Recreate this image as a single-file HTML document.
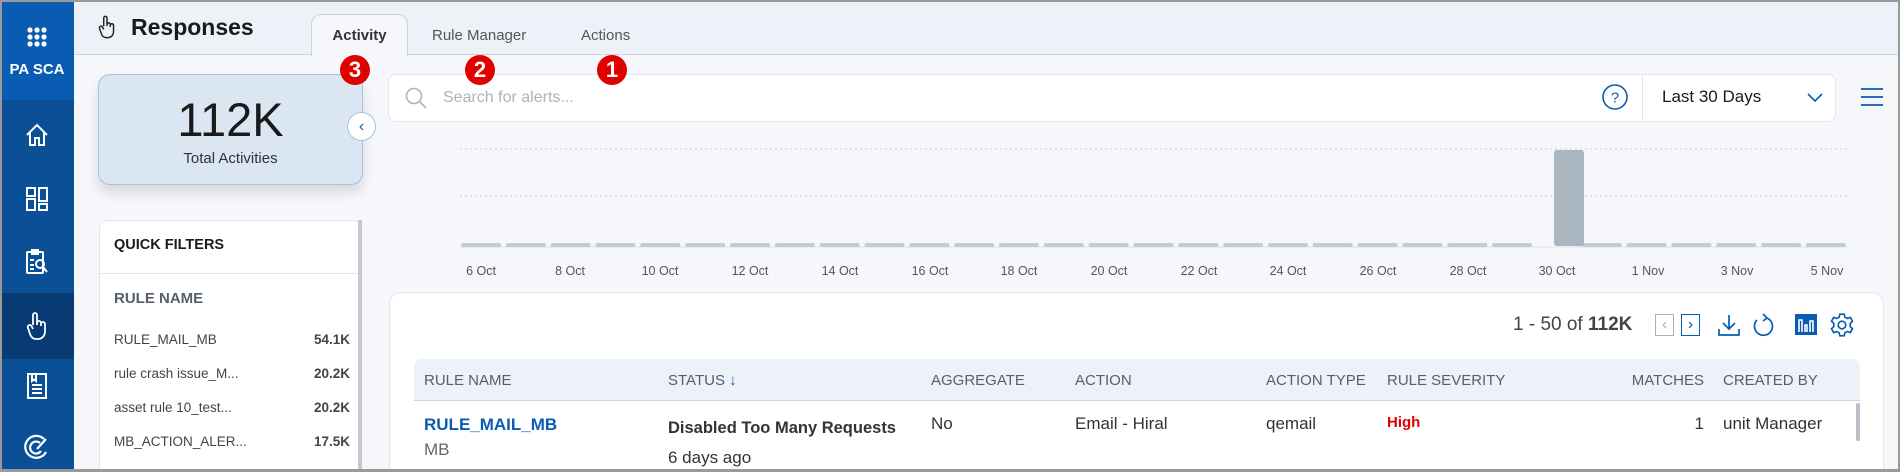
<!DOCTYPE html>
<html style="width:1900px;height:472px;overflow:hidden"><head><meta charset="utf-8"><style>
*{box-sizing:border-box;margin:0;padding:0}
body{width:1900px;height:472px;overflow:hidden;font-family:"Liberation Sans",sans-serif;background:#f5f7fa;position:relative;color:#222}
.a{position:absolute;white-space:nowrap}
.frame{position:absolute;left:0;top:0;width:1900px;height:472px;border:2px solid #9a9a9a;border-bottom-width:3px;pointer-events:none;z-index:50}
.side{left:0;top:0;width:74px;height:472px;background:#0b4f96}
.badge{width:30px;height:30px;border-radius:50%;background:#e00000;color:#fff;font-size:22px;font-weight:bold;text-align:center;line-height:30px;z-index:20}
.th{font-size:15px;color:#55606b;top:372px}
.qf{font-size:13.5px;color:#444;left:114px}
.qv{font-size:13.5px;color:#444;font-weight:bold;right:1550px}
.lbl{font-size:12.5px;color:#555;top:264px;transform:translateX(-50%)}
</style></head><body>
<div class="a side"></div>
<div class="a" style="left:0;top:0;width:74px;height:100px;background:#0a5cb3"></div>
<div class="a" style="left:0;top:293px;width:74px;height:66px;background:#083b73"></div>
<svg class="a" style="left:26px;top:26px" width="22" height="22" viewBox="0 0 22 22" fill="#fff"><circle cx="4" cy="4" r="2.6"/><circle cx="11" cy="4" r="2.6"/><circle cx="18" cy="4" r="2.6"/><circle cx="4" cy="11" r="2.6"/><circle cx="11" cy="11" r="2.6"/><circle cx="18" cy="11" r="2.6"/><circle cx="4" cy="18" r="2.6"/><circle cx="11" cy="18" r="2.6"/><circle cx="18" cy="18" r="2.6"/></svg>
<div class="a" style="left:0;width:74px;top:61px;text-align:center;color:#fff;font-weight:bold;font-size:15px">PA SCA</div>
<svg class="a" style="left:24px;top:122px" width="26" height="26" viewBox="0 0 26 26" fill="none" stroke="#fff" stroke-width="2"><path d="M3 13 L13 3 L23 13 M6 10 V23 H11 V16 H15 V23 H20 V10"/></svg>
<svg class="a" style="left:25px;top:186px" width="24" height="26" viewBox="0 0 24 26" fill="none" stroke="#fff" stroke-width="2"><rect x="2" y="2" width="8" height="8"/><rect x="2" y="13" width="8" height="11"/><rect x="14" y="2" width="8" height="13"/><rect x="14" y="18" width="8" height="6"/></svg>
<svg class="a" style="left:24px;top:248px" width="26" height="28" viewBox="0 0 26 28" fill="none" stroke="#fff" stroke-width="2"><rect x="3" y="4" width="16" height="21" rx="1"/><path d="M8 2 H14 V6 H8Z M6 12 H10 M6 17 H10 M6 21 H10"/><circle cx="16" cy="16" r="4"/><path d="M19 19 L23 24"/></svg>
<svg class="a" style="left:26px;top:311px" width="22" height="30" viewBox="0 0 22 30" fill="none" stroke="#fff" stroke-width="1.8"><path d="M7 14 V4 a2 2 0 0 1 4 0 V14 M11 12 a2 2 0 0 1 4 0 V15 M15 13 a2 2 0 0 1 4 0 V20 c0 5 -3 8 -7 8 H10 c-3 0 -5 -2 -6 -5 L2 17 a2 2 0 0 1 3.5 -2 L7 18"/></svg>
<svg class="a" style="left:26px;top:372px" width="22" height="28" viewBox="0 0 22 28" fill="none" stroke="#fff" stroke-width="2"><rect x="2" y="2" width="18" height="24"/><path d="M6 2 V9 L8 7.5 L10 9 V2 M6 13 H16 M6 17 H16 M6 21 H16"/></svg>
<svg class="a" style="left:24px;top:434px" width="26" height="28" viewBox="0 0 26 28" fill="none" stroke="#fff" stroke-width="2.2"><path d="M20 5 A11 11 0 1 0 22 18 M16 9 A6 6 0 1 0 17 17 M13 15 L22 5"/></svg>

<div class="a" style="left:74px;top:0;width:1826px;height:55px;background:#edf2f9;border-bottom:1px solid #c9d4e2"></div>
<svg class="a" style="left:98px;top:14px" width="18" height="26" viewBox="0 0 22 30" fill="none" stroke="#222" stroke-width="1.8"><path d="M7 14 V4 a2 2 0 0 1 4 0 V14 M11 12 a2 2 0 0 1 4 0 V15 M15 13 a2 2 0 0 1 4 0 V20 c0 5 -3 8 -7 8 H10 c-3 0 -5 -2 -6 -5 L2 17 a2 2 0 0 1 3.5 -2 L7 18"/></svg>
<div class="a" style="left:131px;top:14px;font-size:23px;font-weight:bold;color:#1a1a1a">Responses</div>
<div class="a" style="left:311px;top:14px;width:97px;height:42px;background:#f5f7fa;border:1px solid #c9d4e2;border-bottom:none;border-radius:10px 10px 0 0"></div>
<div class="a" style="left:311px;width:97px;top:27px;text-align:center;font-size:15px;font-weight:bold;color:#333">Activity</div>
<div class="a" style="left:432px;top:27px;font-size:15px;color:#555">Rule Manager</div>
<div class="a" style="left:581px;top:27px;font-size:15px;color:#555">Actions</div>
<div class="a badge" style="left:340px;top:55px">3</div>
<div class="a badge" style="left:465px;top:55px">2</div>
<div class="a badge" style="left:597px;top:55px">1</div>

<div class="a" style="left:98px;top:74px;width:265px;height:111px;background:#dbe6f3;border:1px solid #a9c2df;border-radius:12px;box-shadow:0 8px 12px rgba(0,0,0,.12)"></div>
<div class="a" style="left:98px;width:265px;top:92px;text-align:center;font-size:47px;color:#1a1a1a">112K</div>
<div class="a" style="left:98px;width:265px;top:150px;text-align:center;font-size:15px;color:#333">Total Activities</div>
<div class="a" style="left:347px;top:112px;width:29px;height:29px;border-radius:50%;background:#fff;border:1px solid #a9c2df;color:#0a5cb3;text-align:center;line-height:27px;font-size:16px">&#8249;</div>

<div class="a" style="left:99px;top:220px;width:262px;height:252px;background:#fff;border:1px solid #e1e6ec;border-bottom:none;border-radius:8px 8px 0 0"></div>
<div class="a" style="left:358px;top:220px;width:4px;height:252px;background:#c4c9cf"></div>
<div class="a" style="left:114px;top:237px;font-size:14.5px;font-weight:bold;color:#1a1a1a">QUICK FILTERS</div>
<div class="a" style="left:99px;top:273px;width:259px;height:1px;background:#e1e6ec"></div>
<div class="a" style="left:114px;top:290px;font-size:15px;font-weight:bold;color:#55606b">RULE NAME</div>
<div class="a qf" style="top:332px">RULE_MAIL_MB</div><div class="a qv" style="top:332px">54.1K</div>
<div class="a qf" style="top:366px">rule crash issue_M...</div><div class="a qv" style="top:366px">20.2K</div>
<div class="a qf" style="top:400px">asset rule 10_test...</div><div class="a qv" style="top:400px">20.2K</div>
<div class="a qf" style="top:434px">MB_ACTION_ALER...</div><div class="a qv" style="top:434px">17.5K</div>

<div class="a" style="left:388px;top:74px;width:1448px;height:48px;background:#fff;border:1px solid #e1e6ec;border-radius:8px"></div>
<svg class="a" style="left:404px;top:86px" width="24" height="24" viewBox="0 0 24 24" fill="none" stroke="#aab3bd" stroke-width="1.6"><circle cx="10" cy="10" r="7.5"/><path d="M15.5 15.5 L22 22"/></svg>
<div class="a" style="left:443px;top:89px;font-size:16px;color:#aab3bd">Search for alerts...</div>
<svg class="a" style="left:1601px;top:83px" width="28" height="28" viewBox="0 0 28 28" fill="none" stroke="#0a5cb3" stroke-width="1.6"><circle cx="14" cy="14" r="12"/><text x="14" y="19.5" text-anchor="middle" font-size="15" fill="#0a5cb3" stroke="none" font-family="Liberation Sans">?</text></svg>
<div class="a" style="left:1642px;top:75px;width:1px;height:46px;background:#e1e6ec"></div>
<div class="a" style="left:1662px;top:87px;font-size:17px;color:#1a1a1a">Last 30 Days</div>
<svg class="a" style="left:1806px;top:92px" width="18" height="12" viewBox="0 0 18 12" fill="none" stroke="#0a5cb3" stroke-width="1.6"><path d="M2 2 L9 9 L16 2"/></svg>
<svg class="a" style="left:1860px;top:87px" width="24" height="20" viewBox="0 0 24 20" fill="none" stroke="#0a5cb3" stroke-width="1.8"><path d="M1 2 H23 M1 10 H23 M1 18 H23"/></svg>

<svg class="a" style="left:0;top:0" width="1900" height="260">
<path d="M460 149 H1848 M460 196 H1848" stroke="#c9ced4" stroke-width="1" stroke-dasharray="2 3"/>
<path d="M460 247 H1848" stroke="#dde1e5"/>
<g fill="#c3ccd4" id="bars"></g>
<rect x="1554" y="150" width="30" height="96" rx="3" fill="#a9b6bf"/>
</svg>
<script>
var g=document.getElementById('bars'),s='';for(var i=0;i<31;i++){if(i==24)continue;var c=481+44.83*i;s+='<rect x="'+(c-20)+'" y="243" width="40" height="4" rx="2"/>';}g.innerHTML=s;
</script>
<div class="a lbl" style="left:481px">6 Oct</div><div class="a lbl" style="left:570px">8 Oct</div><div class="a lbl" style="left:660px">10 Oct</div><div class="a lbl" style="left:750px">12 Oct</div><div class="a lbl" style="left:840px">14 Oct</div><div class="a lbl" style="left:930px">16 Oct</div><div class="a lbl" style="left:1019px">18 Oct</div><div class="a lbl" style="left:1109px">20 Oct</div><div class="a lbl" style="left:1199px">22 Oct</div><div class="a lbl" style="left:1288px">24 Oct</div><div class="a lbl" style="left:1378px">26 Oct</div><div class="a lbl" style="left:1468px">28 Oct</div><div class="a lbl" style="left:1557px">30 Oct</div><div class="a lbl" style="left:1648px">1 Nov</div><div class="a lbl" style="left:1737px">3 Nov</div><div class="a lbl" style="left:1827px">5 Nov</div>

<div class="a" style="left:389px;top:292px;width:1495px;height:180px;background:#fff;border:1px solid #e1e6ec;border-bottom:none;border-radius:12px 12px 0 0"></div>
<div class="a" style="left:1513px;top:314px;font-size:19px;color:#444">1 - 50 of <b>112K</b></div>
<div class="a" style="left:1655px;top:314px;width:19px;height:22px;border:1px solid #aab3bd;color:#aab3bd;font-size:16px;text-align:center;line-height:19px">&#8249;</div>
<div class="a" style="left:1681px;top:314px;width:19px;height:22px;border:1.5px solid #0a5cb3;color:#0a5cb3;font-size:16px;text-align:center;line-height:19px">&#8250;</div>
<svg class="a" style="left:1717px;top:313px" width="24" height="24" viewBox="0 0 24 24" fill="none" stroke="#0a5cb3" stroke-width="1.7"><path d="M12 2 V16 M6 10 L12 16 L18 10 M2 16 V22 H22 V16"/></svg>
<svg class="a" style="left:1752px;top:312px" width="22" height="26" viewBox="0 0 22 26" fill="none" stroke="#0a5cb3" stroke-width="1.7"><path d="M15 6 A9 9 0 1 1 5 8"/><path d="M11 2 L15 6 L11 9"/></svg>
<svg class="a" style="left:1795px;top:314px" width="22" height="21" viewBox="0 0 22 21"><rect width="22" height="21" fill="#0a5cb3"/><path d="M4 18 V6 H7 V18 M10 18 V11 H12 V18 M15 18 V7 H18 V18" fill="none" stroke="#fff" stroke-width="1.6"/></svg>
<svg class="a" style="left:1829px;top:312px" width="26" height="26" viewBox="0 0 24 24" fill="none" stroke="#0a5cb3" stroke-width="1.5"><circle cx="12" cy="12" r="3.5"/><path d="M10 2 H14 L14.6 4.8 L17 6 L19.7 5 L21.7 8.5 L19.6 10.5 V13.5 L21.7 15.5 L19.7 19 L17 18 L14.6 19.2 L14 22 H10 L9.4 19.2 L7 18 L4.3 19 L2.3 15.5 L4.4 13.5 V10.5 L2.3 8.5 L4.3 5 L7 6 L9.4 4.8 Z"/></svg>

<div class="a" style="left:414px;top:359px;width:1446px;height:42px;background:#edf2f9;border-bottom:1px solid #c9d4e2;border-radius:8px 8px 0 0"></div>
<div class="a th" style="left:424px">RULE NAME</div>
<div class="a th" style="left:668px">STATUS <span style="color:#0a5cb3">&#8595;</span></div>
<div class="a th" style="left:931px">AGGREGATE</div>
<div class="a th" style="left:1075px">ACTION</div>
<div class="a th" style="left:1266px">ACTION TYPE</div>
<div class="a th" style="left:1387px">RULE SEVERITY</div>
<div class="a th" style="left:1610px;width:94px;text-align:right">MATCHES</div>
<div class="a th" style="left:1723px">CREATED BY</div>
<div class="a" style="left:1856px;top:403px;width:4px;height:38px;background:#b8bfc6;border-radius:2px"></div>

<div class="a" style="left:424px;top:415px;font-size:17px;font-weight:bold;color:#0a5cb3">RULE_MAIL_MB</div>
<div class="a" style="left:424px;top:440px;font-size:17px;color:#666">MB</div>
<div class="a" style="left:668px;top:419px;font-size:16.5px;font-weight:bold;color:#333">Disabled Too Many Requests</div>
<div class="a" style="left:668px;top:448px;font-size:17px;color:#333">6 days ago</div>
<div class="a" style="left:931px;top:414px;font-size:17px;color:#333">No</div>
<div class="a" style="left:1075px;top:414px;font-size:17px;color:#333">Email - Hiral</div>
<div class="a" style="left:1266px;top:414px;font-size:17px;color:#333">qemail</div>
<div class="a" style="left:1387px;top:414px;font-size:15px;font-weight:bold;color:#e00000">High</div>
<div class="a" style="left:1610px;width:94px;top:414px;text-align:right;font-size:17px;color:#333">1</div>
<div class="a" style="left:1723px;top:414px;font-size:17px;color:#333">unit Manager</div>
<div class="frame"></div>
</body></html>
